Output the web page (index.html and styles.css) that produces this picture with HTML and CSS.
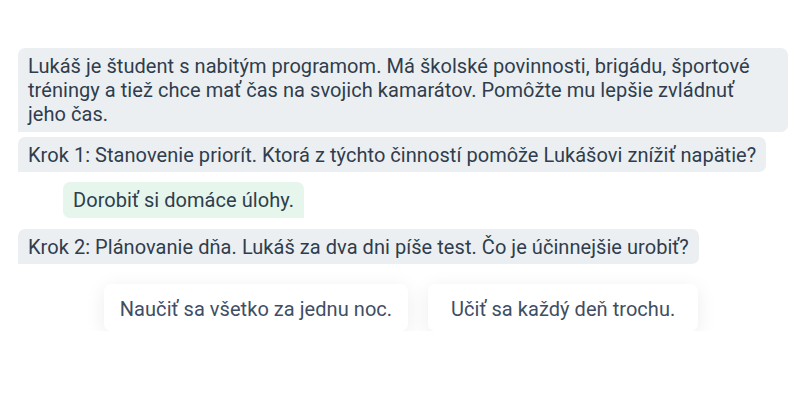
FILE: index.html
```html
<!DOCTYPE html>
<html lang="sk">
<head>
<meta charset="utf-8">
<link rel="stylesheet" href="styles.css">
</head>
<body>
<div class="chat">
  <div class="msg bot intro">Lukáš je študent s nabitým programom. Má školské povinnosti, brigádu, športové tréningy a tiež chce mať čas na svojich kamarátov. Pomôžte mu lepšie zvládnuť jeho čas.</div>
  <div class="msg bot">Krok 1: Stanovenie priorít. Ktorá z týchto činností pomôže Lukášovi znížiť napätie?</div>
  <div class="msg user">Dorobiť si domáce úlohy.</div>
  <div class="msg bot">Krok 2: Plánovanie dňa. Lukáš za dva dni píše test. Čo je účinnejšie urobiť?</div>
  <div class="options">
    <button class="opt">Naučiť sa všetko za jednu noc.</button>
    <button class="opt">Učiť sa každý deň trochu.</button>
  </div>
</div>
</body>
</html>
```
FILE: styles.css
```css
html, body {
  margin: 0;
  padding: 0;
  background: #ffffff;
}
body {
  font-family: Roboto, "Noto Sans", sans-serif;
  font-size: 20px;
  line-height: 24px;
  letter-spacing: 0.05px;
  color: #2f3d4d;
}
.chat {
  width: 770px;
  padding: 48px 0 0 18px;
  display: flex;
  flex-direction: column;
  align-items: flex-start;
}
.msg {
  padding: 6px 10px 5px;
  box-sizing: border-box;
}
.bot {
  background: #eceff1;
  border-radius: 7px 7px 7px 0;
  margin-bottom: 5px;
}
.intro {
  padding-bottom: 6px;
  padding-right: 16px;
}
.bot + .user { margin-top: 5px; }
.user {
  background: #e6f6ec;
  border-radius: 7px 7px 0 7px;
  margin-left: 45px;
  margin-bottom: 11px;
  padding-bottom: 6px;
}
.options {
  align-self: stretch;
  display: flex;
  justify-content: center;
  gap: 20px;
  margin-top: 15px;
  padding-right: 4px;
}
.opt {
  font-family: inherit;
  font-size: 20px;
  line-height: 24px;
  letter-spacing: 0.05px;
  color: #3f4e63;
  background: #ffffff;
  border: none;
  border-radius: 7px;
  min-width: 270px;
  padding: 13px 16px 10px;
  text-align: center;
  box-shadow: 0 4px 20px rgba(0, 0, 0, 0.08);
}
```
